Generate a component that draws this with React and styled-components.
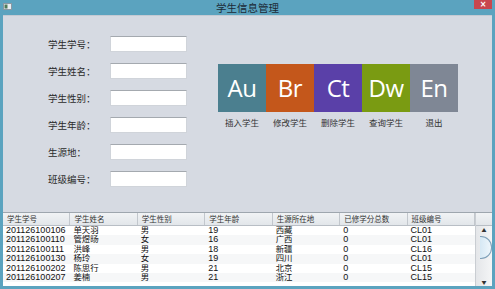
import { Fragment } from "react";
import styled, { createGlobalStyle } from "styled-components";

const GlobalStyle = createGlobalStyle`
  body {
    margin: 0;
    overflow: hidden;
    font-family: "Noto Sans CJK SC", "Noto Sans", sans-serif;
  }
`;

const StyledWindow = styled.div`
  width: 495px;
  height: 289px;
  box-sizing: border-box;
  background: #5ba3bf;
  padding: 0 3px 3px 3px;
  display: flex;
  flex-direction: column;
`;

const TitleBar = styled.div`
  height: 15px;
  display: grid;
  grid-template-columns: 1fr auto 1fr;
  align-items: start;
`;

const AppIcon = styled.div`
  justify-self: start;
  margin-top: 3px;
  display: flex;
`;

const Title = styled.div`
  font-size: 10.5px;
  line-height: 14px;
  color: #1c2a36;
  padding-top: 1px;
`;

const CloseButton = styled.div`
  justify-self: end;
  width: 18px;
  height: 9px;
  background: #c8474e;
  color: #fff;
  font-family: "DejaVu Sans", sans-serif;
  font-size: 8px;
  font-weight: 700;
  line-height: 9px;
  text-align: center;
`;

const Body = styled.div`
  flex: 1;
  background: #d6dae2;
  display: flex;
  flex-direction: column;
  border-top: 1px solid #c4cad3;
`;

const TopSection = styled.div`
  height: 196px;
  display: flex;
  align-items: flex-start;
  padding: 20px 0 0 45px;
  box-sizing: border-box;
`;

const Form = styled.div`
  display: grid;
  grid-template-columns: 62px 77px;
  grid-auto-rows: 16px;
  row-gap: 11px;
  align-items: center;
`;

const Label = styled.span`
  font-size: 9.5px;
  color: #2a2a2a;
  white-space: pre;
`;

const Input = styled.div`
  height: 16px;
  box-sizing: border-box;
  background: #fff;
  border: 1px solid #d0d4da;
  border-top-color: #a4a9af;
`;

const Tiles = styled.div`
  display: flex;
  margin: 28px 0 0 31px;
`;

const Tile = styled.div`
  width: 48px;
  display: flex;
  flex-direction: column;
  align-items: center;
`;

const Square = styled.div`
  width: 48px;
  height: 48px;
  background: ${(p) => p.$color};
  color: #fff;
  font-family: "Open Sans", "Noto Sans", sans-serif;
  font-size: 24px;
  line-height: 48px;
  text-align: center;
  letter-spacing: -0.5px;
`;

const Caption = styled.span`
  margin-top: 4px;
  font-size: 8.5px;
  color: #333;
`;

const TableBox = styled.div`
  flex: 1;
  display: flex;
  background: #fff;
  border-top: 1px solid #9ea6ae;
  overflow: hidden;
`;

const Grid = styled.div`
  flex: 1;
  display: flex;
  flex-direction: column;
`;

const HeaderRow = styled.div`
  height: 12px;
  display: grid;
  grid-template-columns: repeat(7, 1fr);
  background: linear-gradient(#f1f3f5, #e2e6ea);
  border-bottom: 1px solid #b8bec5;
`;

const HeaderCell = styled.div`
  font-size: 7.5px;
  line-height: 12px;
  color: #333;
  padding-left: 4px;
  border-right: 1px solid #c2c7cd;
`;

const Row = styled.div`
  height: 9.4px;
  display: grid;
  grid-template-columns: repeat(7, 1fr);
  background: ${(p) => (p.$alt ? "#f6f7f8" : "#fff")};
`;

const Cell = styled.div`
  font-family: "Liberation Sans", "Noto Sans CJK SC", sans-serif;
  font-size: ${(p) => (p.$cjk ? "8.4px" : "9px")};
  line-height: 9.4px;
  height: 9.4px;
  color: #111;
  padding-left: 3px;
  white-space: nowrap;
  overflow: hidden;
`;

const ScrollBar = styled.div`
  width: 16px;
  display: flex;
  flex-direction: column;
  border-left: 1px solid #c9cdd2;
  background: #eceef0;
`;

const ScrollCorner = styled.div`
  height: 12px;
  background: linear-gradient(#f1f3f5, #e2e6ea);
  border-bottom: 1px solid #b8bec5;
`;

const Track = styled.div`
  flex: 1;
  display: flex;
  flex-direction: column;
  align-items: center;
  background: linear-gradient(90deg, #e4e6e9, #f4f5f6);
`;

const Arrow = styled.span`
  font-size: 5px;
  line-height: 8px;
  color: #333;
`;

const Thumb = styled.div`
  width: 11px;
  height: 21px;
  margin: 2px 0 0 3px;
  border: 1px solid #7e9fb8;
  border-left: none;
  border-radius: 0 11px 11px 0;
  background: linear-gradient(90deg, #d6e8f4, #eef6fb);
`;

const Spacer = styled.div`
  flex: 1;
`;

const fields = ["学生学号：", "学生姓名：", "学生性别：", "学生年龄：", "生源地：", "班级编号："];

const tiles = [
  { code: "Au", color: "#4b7f8f", label: "插入学生" },
  { code: "Br", color: "#c4571b", label: "修改学生" },
  { code: "Ct", color: "#5a40a8", label: "删除学生" },
  { code: "Dw", color: "#7a9b12", label: "查询学生" },
  { code: "En", color: "#7f8795", label: "退出" },
];

const headers = ["学生学号", "学生姓名", "学生性别", "学生年龄", "生源所在地", "已修学分总数", "班级编号"];

const students = [
  ["201126100106", "单天羽", "男", "19", "西藏", "0", "CL01"],
  ["201126100110", "管煜旸", "女", "16", "广西", "0", "CL01"],
  ["201126100111", "洪峰", "男", "18", "新疆", "0", "CL16"],
  ["201126100130", "杨玲", "女", "19", "四川", "0", "CL01"],
  ["201126100202", "陈思行", "男", "21", "北京", "0", "CL15"],
  ["201126100207", "姜楠", "男", "21", "浙江", "0", "CL15"],
];

const isCjk = (v) => /[\u4e00-\u9fff]/.test(v);

function App() {
  return (
    <>
      <GlobalStyle />
      <StyledWindow>
        <TitleBar>
          <AppIcon>
            <svg width="9" height="7" viewBox="0 0 9 7">
              <rect x="0.5" y="0.5" width="8" height="6" fill="#e8eef2" stroke="#8a98a4" strokeWidth="1" />
              <rect x="1.5" y="1.5" width="3" height="4" fill="#4f7a5a" />
            </svg>
          </AppIcon>
          <Title>学生信息管理</Title>
          <CloseButton>×</CloseButton>
        </TitleBar>
        <Body>
          <TopSection>
            <Form>
              {fields.map((f) => (
                <Fragment key={f}>
                  <Label>{f}</Label>
                  <Input />
                </Fragment>
              ))}
            </Form>
            <Tiles>
              {tiles.map((t) => (
                <Tile key={t.code}>
                  <Square $color={t.color}>{t.code}</Square>
                  <Caption>{t.label}</Caption>
                </Tile>
              ))}
            </Tiles>
          </TopSection>
          <TableBox>
            <Grid>
              <HeaderRow>
                {headers.map((h) => (
                  <HeaderCell key={h}>{h}</HeaderCell>
                ))}
              </HeaderRow>
              {students.map((s, i) => (
                <Row key={s[0]} $alt={i % 2 === 1}>
                  {s.map((v, j) => (
                    <Cell key={j} $cjk={isCjk(v)}>
                      {v}
                    </Cell>
                  ))}
                </Row>
              ))}
            </Grid>
            <ScrollBar>
              <ScrollCorner />
              <Track>
                <Arrow>▲</Arrow>
                <Thumb />
                <Spacer />
                <Arrow>▼</Arrow>
              </Track>
            </ScrollBar>
          </TableBox>
        </Body>
      </StyledWindow>
    </>
  );
}

export default App;
